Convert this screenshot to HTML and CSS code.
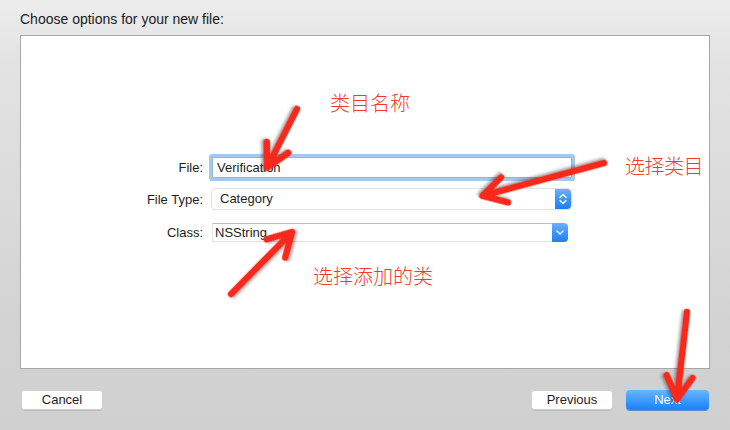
FILE: index.html
```html
<!DOCTYPE html>
<html lang="zh">
<head>
<meta charset="utf-8">
<title>Choose options</title>
<link rel="stylesheet" href="styles.css">
</head>
<body>
<div class="window">
  <div class="title">Choose options for your new file:</div>
  <div class="panel">
    <div class="form">
      <div class="row row-file">
        <span class="lbl">File:</span>
        <div class="field">Verification</div>
      </div>
      <div class="row row-type">
        <span class="lbl">File Type:</span>
        <div class="popup">
          <span class="popup-text">Category</span>
          <span class="stepper">
            <svg width="16" height="20" viewBox="0 0 16 20"><path d="M5 8.5 L8 5.5 L11 8.5 M5 11.5 L8 14.5 L11 11.5" fill="none" stroke="#fff" stroke-width="1.4" stroke-linecap="round" stroke-linejoin="round"/></svg>
          </span>
        </div>
      </div>
      <div class="row row-class">
        <span class="lbl">Class:</span>
        <div class="combo">
          <span class="combo-text">NSString</span>
          <span class="combo-btn">
            <svg width="16" height="19" viewBox="0 0 16 19"><path d="M5 8 L8 11 L11 8" fill="none" stroke="#fff" stroke-width="1.4" stroke-linecap="round" stroke-linejoin="round"/></svg>
          </span>
        </div>
      </div>
    </div>
  </div>
  <div class="buttons">
    <button class="btn">Cancel</button>
    <div class="spacer"></div>
    <button class="btn">Previous</button>
    <button class="btn primary">Next</button>
  </div>
</div>

<div class="annotations">
  <span class="note note-name">类目名称</span>
  <span class="note note-type">选择类目</span>
  <span class="note note-class">选择添加的类</span>
  <svg class="arrows" width="730" height="430" viewBox="0 0 730 430">
    <g class="arrow" transform="translate(297 109) rotate(116.95)">
      <path d="M0 0 L62 0" />
      <path d="M43 -12 L66 0 L43 12" />
    </g>
    <g class="arrow" transform="translate(604 163) rotate(164.87)">
      <path d="M0 0 L122 0" />
      <path d="M103 -13 L126 0 L103 13" />
    </g>
    <g class="arrow" transform="translate(231 294) rotate(-45.46)">
      <path d="M0 0 L83 0" />
      <path d="M64 -13 L87 0 L64 13" />
    </g>
    <g class="arrow" transform="translate(687 312) rotate(96.48)">
      <path d="M0 0 L84 0" />
      <path d="M65 -13 L88 0 L65 13" />
    </g>
  </svg>
</div>
</body>
</html>
```

FILE: styles.css
```css
html, body {
  margin: 0;
  padding: 0;
}
body {
  width: 730px;
  height: 430px;
  overflow: hidden;
  position: relative;
  font-family: "Liberation Sans", Arial, sans-serif;
  font-size: 13px;
  color: #1e1e1e;
  background: linear-gradient(180deg, #ededed 0px, #e3e3e3 60px, #d2d2d2 330px, #d0d0d0 430px);
}
.window {
  display: flex;
  flex-direction: column;
  height: 430px;
}
.title {
  height: 35px;
  box-sizing: border-box;
  padding: 11px 0 0 20px;
  font-size: 14px;
  line-height: 17px;
  color: #1a1a1a;
}
.panel {
  margin: 0 20px;
  height: 334px;
  box-sizing: border-box;
  border: 1px solid #a7a7a7;
  background: #fff;
}
.form {
  padding-top: 121px;
  display: flex;
  flex-direction: column;
}
.row {
  display: flex;
  align-items: center;
  gap: 9px;
}
.lbl {
  width: 182px;
  text-align: right;
  color: #1e1e1e;
}
.row-file { height: 21px; }
.row-type { height: 20px; margin-top: 11px; }
.row-class { height: 19px; margin-top: 14px; }

.field {
  width: 360px;
  height: 21px;
  box-sizing: border-box;
  border: 1px solid #8fb4e0;
  box-shadow: 0 0 0 3px #a4c9f1;
  border-radius: 1px;
  padding: 0 4px;
  line-height: 19px;
  background: #fff;
}
.popup {
  width: 359px;
  height: 20px;
  box-sizing: border-box;
  display: flex;
  align-items: center;
  border-radius: 4px;
  background: #fff;
  box-shadow: 0 0 0 1px #e2e2e2, 0 1px 0 0 #c6c6c6;
}
.popup-text {
  flex: 1;
  padding-left: 8px;
  line-height: 20px;
}
.stepper {
  width: 16px;
  height: 20px;
  display: flex;
  border-radius: 0 4px 4px 0;
  background: linear-gradient(180deg, #6cb2fb 0%, #3d96fb 50%, #1d7ffa 100%);
}
.combo {
  width: 356px;
  height: 19px;
  display: flex;
  align-items: stretch;
}
.combo-text {
  flex: 1;
  box-sizing: border-box;
  border-top: 1px solid #bcbcbc;
  border-left: 1px solid #e3e3e3;
  border-bottom: 1px solid #e3e3e3;
  padding-left: 2px;
  line-height: 17px;
}
.combo-btn {
  width: 16px;
  height: 19px;
  display: flex;
  border-radius: 0 4px 4px 0;
  background: linear-gradient(180deg, #6cb2fb 0%, #3d96fb 50%, #1d7ffa 100%);
}

.buttons {
  display: flex;
  align-items: center;
  margin-top: 21px;
  padding: 0 21px;
  gap: 13px;
}
.spacer { flex: 1; }
.btn {
  width: 82px;
  height: 20px;
  box-sizing: border-box;
  padding: 0;
  margin: 0;
  border: none;
  border-radius: 4px;
  background: #fff;
  box-shadow: 0 0 0 1px #d0d0d0 inset, 0 1px 0 0 #b9b9b9;
  font-family: "Liberation Sans", Arial, sans-serif;
  font-size: 13px;
  color: #1e1e1e;
  line-height: 20px;
}
.btn.primary {
  width: 83px;
  color: #fff;
  background: linear-gradient(180deg, #6ab6fb 0%, #3f9bfb 50%, #1a82fb 100%);
  box-shadow: 0 1px 0 0 #5c8fcf;
}

.annotations {
  position: absolute;
  left: 0;
  top: 0;
  width: 730px;
  height: 430px;
  pointer-events: none;
}
.note {
  position: absolute;
  font-family: "Noto Sans CJK SC", "Noto Sans", sans-serif;
  font-size: 20px;
  font-weight: 300;
  line-height: 24px;
  color: #f2392c;
  white-space: nowrap;
}
.note-name { left: 330px; top: 91px; }
.note-type { left: 625px; top: 154px; letter-spacing: -0.5px; }
.note-class { left: 313px; top: 264px; }
.arrows {
  position: absolute;
  left: 0;
  top: 0;
}
.arrow {
  fill: none;
  stroke: #f8281b;
  stroke-linecap: round;
  stroke-linejoin: round;
  stroke-width: 6.5;
  filter: drop-shadow(1px 2px 1.5px rgba(0, 0, 0, 0.35));
}
```
